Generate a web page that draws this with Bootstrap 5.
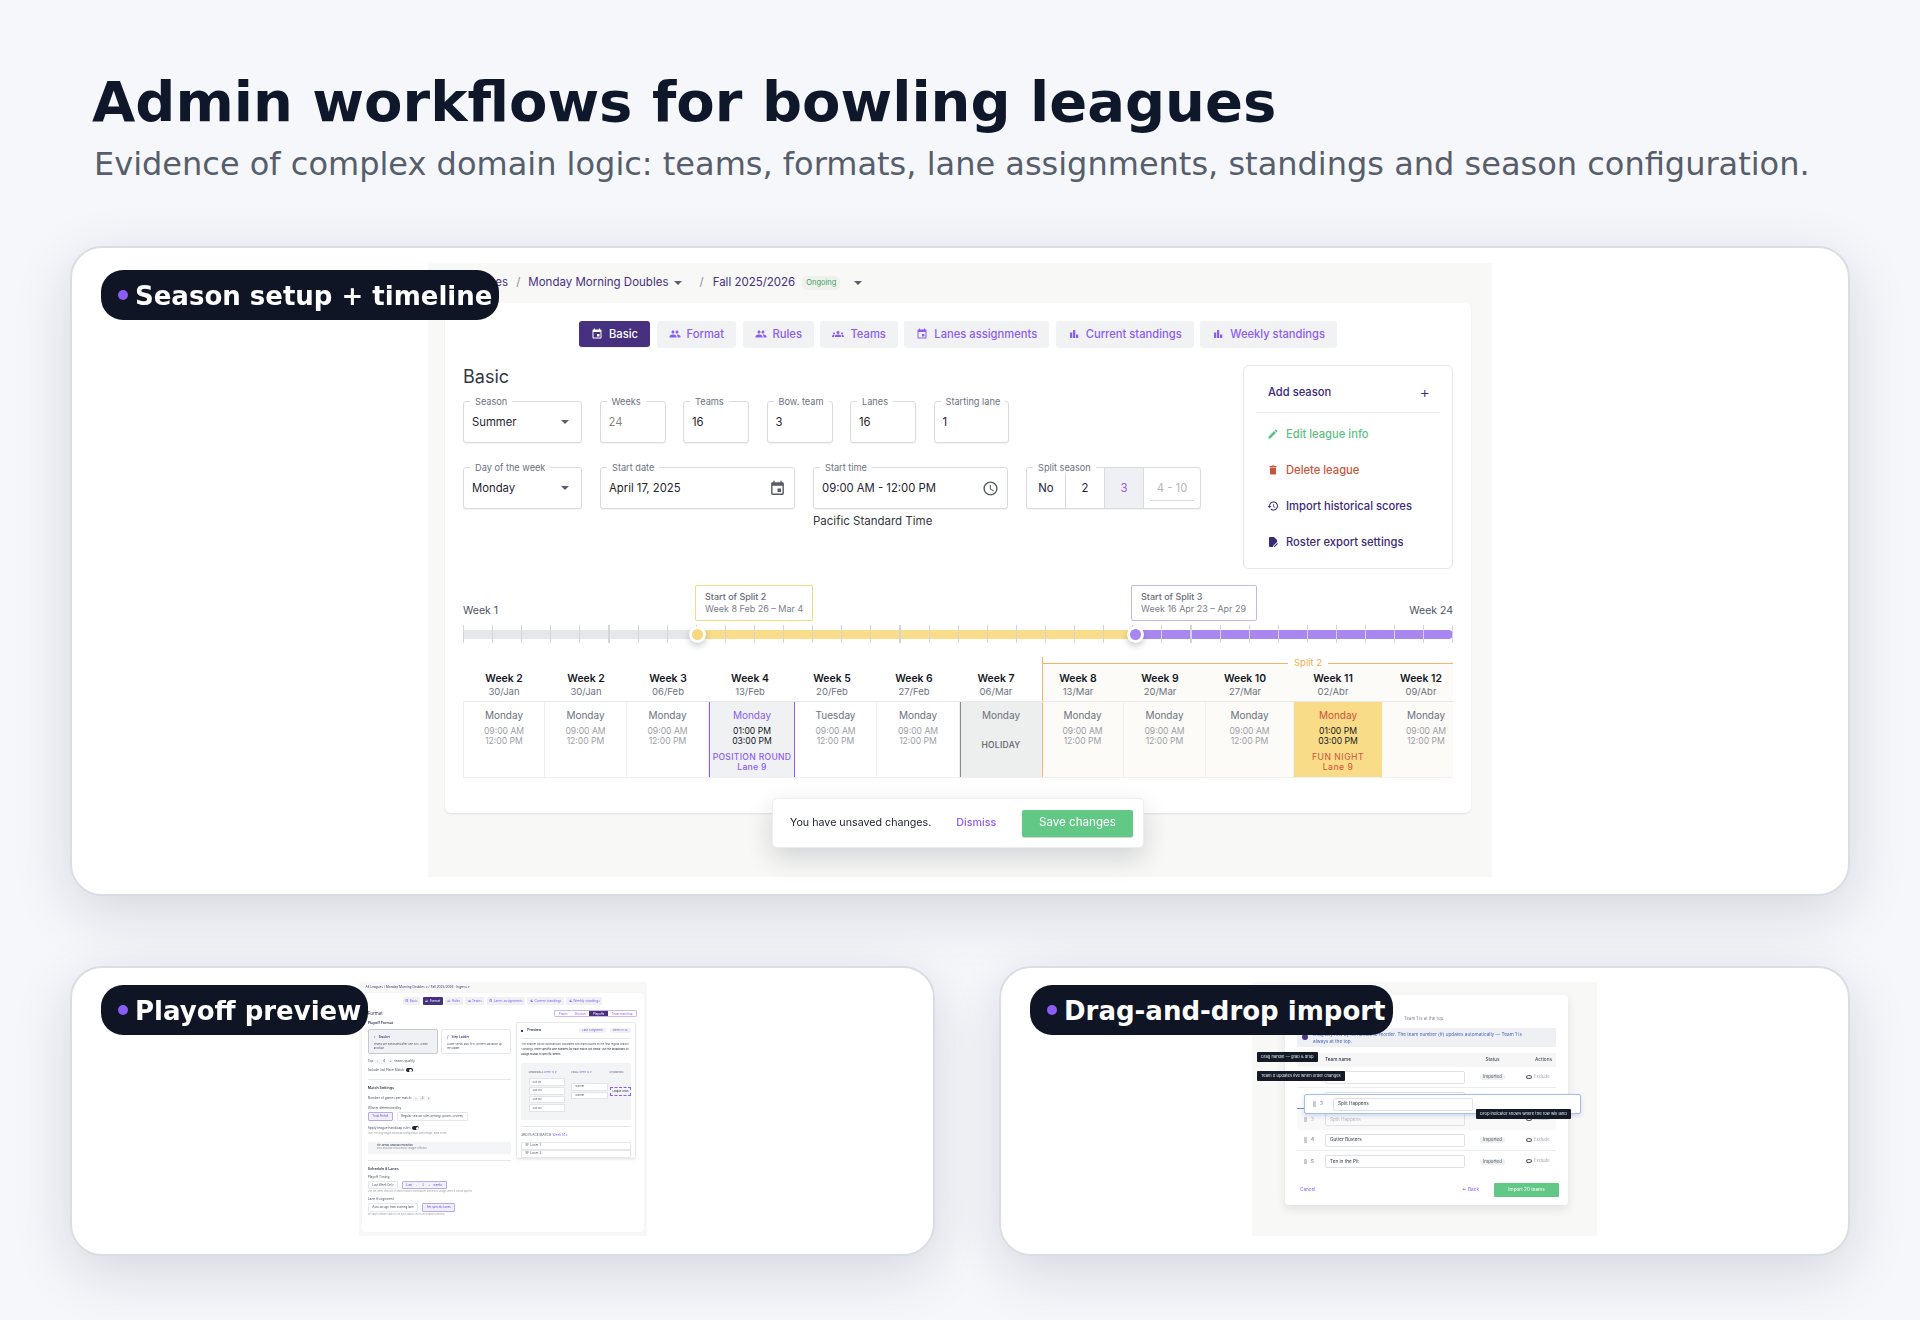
<!DOCTYPE html>
<html lang="en">
<head>
  <meta charset="UTF-8">
  <title>Admin workflows for bowling leagues</title>
  <link href="https://cdn.jsdelivr.net/npm/bootstrap@5.3.2/dist/css/bootstrap.min.css" rel="stylesheet">
  <style>
    body { background: #f6f7fb; font-family: Inter, "Liberation Sans", sans-serif; color: #1f2430; }
    .page-wrap { width: 1920px; height: 1320px; padding: 70px 70px 0; overflow: hidden; }
    .hero-title { font: 700 56px/64px "DejaVu Sans", sans-serif; color: #0f172a; margin: 0 0 0 22px; }
    .hero-sub { font: 400 32px/40px "DejaVu Sans", sans-serif; color: #565e6c; margin: 10px 0 0 24px; }
    .show-card { position: relative; background: #fff; border: 2px solid #d9dde5; border-radius: 32px; box-shadow: 0 16px 60px rgba(15, 23, 42, .14); display: flex; justify-content: center; }
    .show-main { height: 650px; margin-top: 62px; padding-top: 15px; }
    .show-row { display: grid; grid-template-columns: 865px 851px; gap: 64px; margin-top: 70px; }
    .show-small { height: 290px; padding-top: 14px; }
    .tag-pill { position: absolute; left: 29px; top: 22px; height: 50px; background: #0f1524; color: #fff; border-radius: 22px; font: 700 26px/52px "DejaVu Sans", sans-serif; padding: 0 7px 0 34px; white-space: nowrap; z-index: 5; }
    .show-small .tag-pill { top: 17px; }
    .tag-pill::before { content: ""; position: absolute; left: 17px; top: 20px; width: 10px; height: 10px; border-radius: 50%; background: #8b5cf6; }

    /* main screenshot */
    .shot { width: 1064px; height: 614px; background: #f8f8f6; padding: 0 21px 0 17px; font-size: 11.5px; filter: blur(.2px); }
    .crumbs { height: 40px; color: #46307f; font-size: 11.5px; gap: 6px; }
    .crumb-sep { color: #8a8f99; margin: 0 2px; }
    .crumb-sep-b { color: #8a8f99; margin: 0 3px 0 11px; }
    .tri { display: inline-block; width: 0; height: 0; border-left: 4px solid transparent; border-right: 4px solid transparent; border-top: 4.5px solid #5b6070; }
    .live-pill { background: #eff1ec; color: #3f9b64; font-size: 7.5px; border-radius: 5px; padding: 1px 4px; margin-left: 1px; }
    .panel { position: relative; height: 510px; background: #fff; border-radius: 6px; box-shadow: 0 1px 2px rgba(0, 0, 0, .1); padding: 18px 18px 0; }
    .tab-row { gap: 6.5px; }
    .tab-btn { height: 26px; padding: 0 12px; background: #f1f2f3; color: #8b5cf6; border-radius: 3px; font-size: 11.2px; font-weight: 500; gap: 6px; white-space: nowrap; box-shadow: 0 1px 1px rgba(0, 0, 0, .05); }
    .tab-btn svg { width: 12px; height: 12px; fill: currentColor; }
    .tab-on { background: #46307f; color: #fff; }
    .sect-title { font-size: 18px; line-height: 22px; font-weight: 400; margin: 19px 0 13px; color: #333842; }
    .fld { position: relative; height: 42px; border: 1px solid #d9dbde; border-radius: 3px; padding: 0 8px; background: #fff; font-size: 11.3px; box-shadow: 0 1px 1px rgba(0, 0, 0, .05); }
    .fld-cap { position: absolute; top: -6px; left: 6px; padding: 0 5px; background: #fff; font-size: 9.2px; line-height: 11px; color: #6b7280; white-space: nowrap; }
    .fld svg { width: 17px; height: 17px; fill: #565b66; }
    .w-119 { width: 119px; } .w-66 { width: 66px; } .w-73 { width: 75px; } .w-195 { width: 195px; }
    .field-gap { gap: 17.5px; }
    .field-gap-b { gap: 18px; }
    .seg-cell { width: 39px; height: 100%; border-right: 1px solid #d9dbde; }
    .seg-on { background: #eef0f3; color: #8b5cf6; }
    .seg-off { width: 56px; border-right: 0; color: #b4b7bd; position: relative; }
    .seg-off::after { content: ""; position: absolute; left: 6px; right: 6px; bottom: 7px; border-bottom: 1px solid #d9dbde; }
    .tz-note { margin: 5px 0 0 350px; font-size: 11.5px; line-height: 14px; color: #333842; }
    .side-box { width: 210px; height: 204px; border: 1px solid #e6e7ea; border-radius: 6px; margin-top: 18px; padding: 0 12px; font-weight: 500; color: #3b2a78; font-size: 11.2px; }
    .side-head { height: 47px; padding: 6px 10px 0 12px; border-bottom: 1px solid #e9eaec; margin-bottom: 3px; }
    .side-item { height: 36px; padding-left: 12px; gap: 7px; }
    .side-item svg { width: 12px; height: 12px; fill: currentColor; margin-left: -1px; }
    .tx-green { color: #5cbf85; } .tx-red { color: #c8553a; }

    /* timeline */
    .time-line { position: relative; height: 72px; margin-top: 16px; }
    .week-cap { position: absolute; top: 18px; font-size: 10.5px; color: #4b5563; }
    .track { position: absolute; left: 0; right: 0; top: 45px; height: 9px; border-radius: 0 5px 5px 0; background: linear-gradient(to right, #e6e7ea 0 234px, #f9dd8a 234px 672px, #a987f0 672px); }
    .ticks { position: absolute; left: 0; right: 0; top: 40px; height: 18px; background: repeating-linear-gradient(to right, #d3d5d9 0 1px, transparent 1px 29.1px); }
    .knob { position: absolute; top: 41px; width: 17px; height: 17px; border-radius: 50%; border: 3px solid #fff; box-shadow: 0 3px 6px rgba(15, 23, 42, .22); }
    .call-box { position: absolute; top: 0; height: 36px; padding: 5px 9px; background: #fff; border-radius: 2px; font-size: 9px; line-height: 12px; color: #7b808a; white-space: nowrap; }
    .call-box b { display: block; font-weight: 500; color: #666b75; }
    .week-wrap { position: relative; height: 121px; overflow: hidden; }
    .split-band { position: absolute; left: 579px; top: 0; right: 0; bottom: 0; border-left: 1px solid #f5b56a; }
    .split-fill { position: absolute; left: 0; right: 0; top: 6px; bottom: 0; background: #fcfbf7; border-top: 1px solid #f5b56a; }
    .split-cap { position: absolute; left: 245px; top: 0; padding: 0 6px; background: #fff; color: #f3a949; font-size: 9.5px; line-height: 12px; }
    .week-heads { position: relative; display: grid; grid-template-columns: repeat(9, 82px) repeat(3, 88px); height: 44px; padding-top: 15px; text-align: center; }
    .week-name { font-size: 10.4px; line-height: 14px; font-weight: 600; color: #14171f; }
    .week-date { font-size: 9.5px; line-height: 12px; color: #6b7280; }
    .week-cells { position: relative; display: grid; grid-template-columns: 82px 82px 82px 86px 82px 83px 82px 82px 82px 88px 88px 88px; height: 77px; border-top: 1px solid #e8e9eb; border-bottom: 1px solid #eeeff1; }
    .wk-cell { border-right: 1px solid #eff0f2; padding-top: 7px; text-align: center; font-size: 8.6px; line-height: 10px; color: #9b9fa7; white-space: nowrap; }
    .wk-cell:first-child { border-left: 1px solid #eff0f2; }
    .wk-day { display: block; font-size: 10px; line-height: 12px; color: #6b7280; margin-bottom: 5px; }
    .wk-note { display: block; margin-top: 6px; letter-spacing: .3px; font-weight: 500; }
    .wk-pos { background: #f0f1f3; border-left: 1px solid #8b5cf6; border-right: 1px solid #8b5cf6; color: #14171f; }
    .wk-pos .wk-day, .wk-pos .wk-note { color: #8b5cf6; }
    .wk-off { background: #edeeee; border-left: 1px solid #85888e; }
    .wk-off b { display: block; margin-top: 19px; font-size: 8.5px; letter-spacing: .3px; font-weight: 500; color: #5f636c; }
    .wk-fun { background: #f9dc87; color: #14171f; border-right: 0; }
    .wk-fun .wk-day, .wk-fun .wk-note { color: #d0523c; }
    .wk-fun .wk-note { font-weight: 400; letter-spacing: .5px; }
    .save-toast { position: absolute; left: 327px; top: 495px; width: 372px; height: 50px; background: #fff; border: 1px solid #eceef1; border-radius: 5px; box-shadow: 0 10px 26px rgba(15, 23, 42, .16); padding: 0 10px 0 17px; font-size: 10.7px; color: #20242c; white-space: nowrap; }
    .toast-link { color: #8b5cf6; font-weight: 500; margin-left: 25px; }
    .toast-save { flex: 0 0 111px; height: 27px; margin-left: auto; background: #62c885; color: #fff; border-radius: 2px; font-size: 11.6px; box-shadow: 0 1px 1px rgba(0, 0, 0, .18); }

    /* playoff thumbnail */
    .mini-a { width: 288px; height: 254px; background: #f8f8f6; padding: 0 3px; font-size: 3.2px; line-height: 5px; color: #4b5563; filter: blur(.3px); white-space: nowrap; }
    .mini-crumbs { height: 11px; color: #46307f; }
    .mini-panel { position: relative; height: 239px; background: #fff; border-radius: 2px; padding: 4px 6.3px 0; box-shadow: 0 0 1px rgba(0, 0, 0, .1); }
    .mini-tab { height: 8px; padding: 0 2.5px; gap: 1px; background: #f0f1f4; color: #8b5cf6; border-radius: 1px; }
    .mini-tab svg { width: 3.5px; height: 3.5px; fill: currentColor; }
    .mini-on { background: #46307f; color: #fff; }
    .mini-tabs { gap: 2.3px; }
    .mini-bar { height: 7px; margin: 5px 0 4px; }
    .mini-h { font-size: 4.5px; color: #333842; }
    .mini-seg { height: 7px; border: .4px solid #c9b8f0; border-radius: 1px; }
    .mini-seg span { padding: 0 3.6px; color: #8b5cf6; line-height: 6px; font-size: 3px; }
    .mini-seg .mini-on { color: #fff; }
    .mini-left { width: 143px; }
    .mini-right { width: 120.3px; height: 137px; margin-left: 5px; margin-top: 1px; border: .4px solid #e8e9eb; border-radius: 2px; padding: 5px 4.5px 0; box-shadow: 0 1px 2px rgba(0, 0, 0, .08); }
    .mini-b { font-size: 3.6px; font-weight: 600; color: #374151; }
    .ln { height: 5px; display: flex; align-items: center; gap: 1.5px; }
    .mt-1h { margin-top: 1px; } .mt-2h { margin-top: 1.5px; } .mt-3h { margin-top: 3px; } .mt-4h { margin-top: 4px; } .mt-5h { margin-top: 5px; } .mt-6h { margin-top: 6px; }
    .mini-opts { gap: 3px; margin-top: 3px; }
    .mini-opt { width: 70px; height: 24.5px; border: .4px solid #e6e7ea; border-radius: 2px; padding: 3.5px 5px; font-size: 2.7px; line-height: 4px; white-space: normal; }
    .mini-sel { background: #f0f1f4; border-color: #c6c8cf; }
    .mini-opt-head { display: flex; align-items: center; gap: 3px; height: 6px; margin-bottom: 2.5px; font-size: 3px; font-weight: 600; color: #46307f; }
    .mini-ico { font-size: 5px; color: #8b5cf6; font-weight: 400; }
    .mini-hr { border-top: .4px solid #e6e7ea; margin: 6.5px 0 5.5px; }
    .mini-btn { height: 8.7px; padding: 0 3.5px; border: .4px solid #e6e7ea; border-radius: 1px; font-size: 2.9px; gap: 1.5px; }
    .mini-act { background: #f1f0fa; border-color: #bba8ee; color: #6d4fd0; }
    .mini-note { height: 4px; line-height: 4px; font-size: 2.4px; color: #9b9fa7; }
    .mini-step { display: inline-block; min-width: 5px; padding: 0 1px; text-align: center; background: #f4f5f6; border-radius: .5px; line-height: 5px; }
    .mini-sw { position: relative; display: inline-block; width: 7px; height: 4px; border-radius: 2px; background: #1f2430; }
    .mini-sw::after { content: ""; position: absolute; right: .5px; top: .5px; width: 3px; height: 3px; border-radius: 50%; background: #fff; }
    .mini-alert { height: 12px; background: #f4f5f6; border-radius: 1px; padding: 2px 3px 0 9px; font-size: 2.6px; line-height: 3.8px; color: #8a8f99; }
    .mini-alert b { color: #4b5563; font-weight: 600; }
    .mini-pill { padding: 0 3px; background: #f0effa; color: #7b61d6; border-radius: 2px; font-size: 2.5px; line-height: 5px; }
    .mini-sq { width: 2px; height: 2px; background: #46307f; }
    .mini-copy { font-size: 2.55px; line-height: 5px; white-space: normal; margin-top: -1.5px; }
    .mini-copy b { font-weight: 500; color: #333842; }
    .mini-hr-b { border-top: .4px solid #e6e7ea; margin: 5px 0 4px; }
    .mini-bracket { height: 57px; margin-top: 6px; background: #f3f4f5; border-radius: 2px; padding: 7.5px 0 0 7.3px; font-size: 2.5px; overflow: hidden; }
    .mini-col-a { flex: 0 0 42.7px; }
    .mini-col-b { flex: 0 0 38.3px; }
    .mini-slot { height: 7.7px; width: 36px; background: #fff; border: .3px solid #e3e4e7; margin-bottom: 1px; padding: 0 3px; font-size: 2.7px; }
    .mini-col-b .mini-slot { width: 36.7px; }
    .mini-cap { height: 5px; line-height: 5px; margin-bottom: 3.2px; }
    .mini-champ { width: 21px; height: 8.7px; margin-top: 12.3px; border: .4px dashed #8b5cf6; background: #f4f2fb; font-weight: 600; padding-left: 2px; font-size: 2.4px; }
    .mini-row { height: 8.3px; border: .4px solid #e6e7ea; padding: 0 3px; }

    /* import thumbnail */
    .mini-c { position: relative; width: 345px; height: 254px; background: #f8f8f6; padding: 13px 29px 0 33px; font-size: 4.7px; color: #4b5563; filter: blur(.25px); white-space: nowrap; }
    .imp-card { height: 210px; background: #fff; border-radius: 4px; padding: 18px 12px 0; box-shadow: 0 4px 10px rgba(15, 23, 42, .1); }
    .imp-top { padding-left: 107px; height: 15px; line-height: 12px; color: #7b808a; font-size: 4.3px; }
    .imp-alert { height: 19px; background: #eef0f4; color: #4a66b8; padding: 0 6px 0 16px; position: relative; line-height: 6.3px; display: flex; align-items: center; }
    .imp-alert::before { content: ""; position: absolute; left: 5px; top: 6px; width: 6px; height: 6px; border-radius: 50%; background: #46307f; }
    .imp-head { height: 14px; margin-top: 6px; background: #f6f6f7; font-weight: 500; }
    .imp-row { height: 21px; border-bottom: .4px solid #eceef0; }
    .imp-num { display: flex; align-items: center; gap: 4px; width: 28px; padding-left: 7px; color: #4b5563; }
    .imp-grip { display: inline-block; width: 3px; height: 5.5px; background: #c9ccd2; border-radius: .5px; }
    .imp-input { width: 140px; height: 13px; border: .5px solid #dfe1e5; border-radius: 2px; padding: 0 4px; color: #333842; display: flex; align-items: center; }
    .imp-stat { width: 55px; text-align: center; }
    .imp-stat span { padding: 0 3px; background: #eeeff1; border-radius: 3px; line-height: 6px; display: inline-block; font-size: 4.4px; }
    .imp-act { margin-left: 6px; color: #a0a4ab; gap: 2px; font-size: 4.2px; }
    .imp-acth { width: 26px; margin-left: 6px; text-align: right; }
    .imp-eye { width: 6px; height: 4px; border: .7px solid #5a5f6a; border-radius: 50%; }
    .imp-ghost { background: #f9f9fa; color: #b4b7bd; border-bottom: 0; }
    .imp-ghost .imp-input, .imp-ghost .imp-num { color: #b4b7bd; }
    .imp-drag { position: absolute; left: 52px; top: 112px; width: 277px; height: 20px; background: #fff; border: .8px solid #a3bdf0; border-radius: 2px; box-shadow: 0 2px 4px rgba(60, 90, 170, .2); padding-left: 8px; z-index: 2; color: #333842; }
    .imp-dragnum { display: flex; align-items: center; gap: 4px; width: 20px; }
    .imp-line { position: absolute; left: 45px; top: 126px; width: 7px; border-top: .7px solid #6d8fdc; }
    .imp-tip { position: absolute; height: 10px; line-height: 10px; padding: 0 4px; background: #151a28; color: #e5e7eb; border-radius: 1px; font-size: 4.1px; z-index: 3; }
    .imp-foot { height: 36px; margin: 0 -3px 0 3px; }
    .imp-go { width: 65px; height: 14px; gap: 3px; background: #62c885; color: #fff; border-radius: 1px; margin-left: 15px; }
    .imp-link { color: #8b5cf6; }
  </style>
</head>
<body>
  <svg width="0" height="0" class="d-block position-absolute">
    <symbol id="i-event" viewBox="0 0 24 24"><path d="M17 12h-5v5h5v-5zM16 1v2H8V1H6v2H5c-1.11 0-1.99.9-1.99 2L3 19c0 1.1.89 2 2 2h14c1.1 0 2-.9 2-2V5c0-1.1-.9-2-2-2h-1V1h-2zm3 18H5V8h14v11z"/></symbol>
    <symbol id="i-people" viewBox="0 0 24 24"><path d="M16 11c1.66 0 2.99-1.34 2.99-3S17.66 5 16 5c-1.66 0-3 1.34-3 3s1.34 3 3 3zm-8 0c1.66 0 2.99-1.34 2.99-3S9.66 5 8 5C6.34 5 5 6.34 5 8s1.34 3 3 3zm0 2c-2.33 0-7 1.17-7 3.5V19h14v-2.5c0-2.33-4.67-3.5-7-3.5zm8 0c-.29 0-.62.02-.97.05 1.16.84 1.97 1.97 1.97 3.45V19h6v-2.5c0-2.33-4.67-3.5-7-3.5z"/></symbol>
    <symbol id="i-groups" viewBox="0 0 24 24"><path d="M12 12.75c1.63 0 3.07.39 4.24.9 1.08.48 1.76 1.56 1.76 2.73V18H6v-1.61c0-1.18.68-2.26 1.76-2.73 1.17-.52 2.61-.91 4.24-.91zM4 13c1.1 0 2-.9 2-2s-.9-2-2-2-2 .9-2 2 .9 2 2 2zm1.13 1.1C4.76 14.04 4.39 14 4 14c-.99 0-1.93.21-2.78.58C.48 14.9 0 15.62 0 16.43V18h4.5v-1.61c0-.83.23-1.61.63-2.29zM20 13c1.1 0 2-.9 2-2s-.9-2-2-2-2 .9-2 2 .9 2 2 2zm4 3.43c0-.81-.48-1.53-1.22-1.85-.85-.37-1.79-.58-2.78-.58-.39 0-.76.04-1.13.1.4.68.63 1.46.63 2.29V18H24v-1.57zM12 6c1.66 0 3 1.34 3 3s-1.34 3-3 3-3-1.34-3-3 1.34-3 3-3z"/></symbol>
    <symbol id="i-bars" viewBox="0 0 24 24"><path d="M4 9h4.5v11H4zM10 4h4.5v16H10zM16 13h4.5v7H16z"/></symbol>
    <symbol id="i-edit" viewBox="0 0 24 24"><path d="M3 17.25V21h3.75L17.81 9.94l-3.75-3.75L3 17.25zM20.71 7.04c.39-.39.39-1.02 0-1.41l-2.34-2.34c-.39-.39-1.02-.39-1.41 0l-1.83 1.83 3.75 3.75 1.83-1.83z"/></symbol>
    <symbol id="i-trash" viewBox="0 0 24 24"><path d="M6 19c0 1.1.9 2 2 2h8c1.1 0 2-.9 2-2V7H6v12zM19 4h-3.5l-1-1h-5l-1 1H5v2h14V4z"/></symbol>
    <symbol id="i-history" viewBox="0 0 24 24"><path d="M13 3c-4.97 0-9 4.03-9 9H1l3.89 3.89.07.14L9 12H6c0-3.87 3.13-7 7-7s7 3.13 7 7-3.13 7-7 7c-1.93 0-3.68-.79-4.94-2.06l-1.42 1.42C8.27 19.99 10.51 21 13 21c4.97 0 9-4.03 9-9s-4.03-9-9-9zm-1 5v5l4.28 2.54.72-1.21-3.5-2.08V8H12z"/></symbol>
    <symbol id="i-file" viewBox="0 0 24 24"><path d="M6 2h8l6 6v4l-8 8v2H6c-1.1 0-2-.9-2-2V4c0-1.1.9-2 2-2zM14 22v-1.5l6.5-6.5 1.5 1.5-6.5 6.5H14z"/></symbol>
    <symbol id="i-clock" viewBox="0 0 24 24"><path d="M12 2a10 10 0 1 0 0 20 10 10 0 0 0 0-20zm0 18a8 8 0 1 1 0-16 8 8 0 0 1 0 16zm.5-13H11v6l5 3 .8-1.2-4.3-2.6V7z"/></symbol>
  </svg>

  <div class="page-wrap">
    <h1 class="hero-title">Admin workflows for bowling leagues</h1>
    <p class="hero-sub">Evidence of complex domain logic: teams, formats, lane assignments, standings and season configuration.</p>

    <!-- season setup -->
    <div class="show-card show-main">
      <div class="tag-pill">Season setup + timeline</div>
      <div class="shot">
        <div class="crumbs d-flex align-items-center">
          <span>All Leagues</span><span class="crumb-sep">/</span>
          <span>Monday Morning Doubles</span><span class="tri"></span>
          <span class="crumb-sep-b">/</span>
          <span>Fall 2025/2026</span><span class="live-pill">Ongoing</span><span class="tri ms-2"></span>
        </div>
        <div class="panel">
          <div class="tab-row d-flex justify-content-center">
            <div class="tab-btn tab-on d-flex align-items-center"><svg><use href="#i-event"/></svg>Basic</div>
            <div class="tab-btn d-flex align-items-center"><svg><use href="#i-people"/></svg>Format</div>
            <div class="tab-btn d-flex align-items-center"><svg><use href="#i-people"/></svg>Rules</div>
            <div class="tab-btn d-flex align-items-center"><svg><use href="#i-groups"/></svg>Teams</div>
            <div class="tab-btn d-flex align-items-center"><svg><use href="#i-event"/></svg>Lanes assignments</div>
            <div class="tab-btn d-flex align-items-center"><svg><use href="#i-bars"/></svg>Current standings</div>
            <div class="tab-btn d-flex align-items-center"><svg><use href="#i-bars"/></svg>Weekly standings</div>
          </div>

          <div class="d-flex justify-content-between">
            <div>
              <h2 class="sect-title">Basic</h2>
              <div class="d-flex field-gap">
                <div class="fld w-119 d-flex align-items-center justify-content-between"><span class="fld-cap">Season</span>Summer<span class="tri me-1"></span></div>
                <div class="fld w-66 d-flex align-items-center text-black-50"><span class="fld-cap">Weeks</span>24</div>
                <div class="fld w-66 d-flex align-items-center"><span class="fld-cap">Teams</span>16</div>
                <div class="fld w-66 d-flex align-items-center"><span class="fld-cap">Bow. team</span>3</div>
                <div class="fld w-66 d-flex align-items-center"><span class="fld-cap">Lanes</span>16</div>
                <div class="fld w-73 d-flex align-items-center"><span class="fld-cap">Starting lane</span>1</div>
              </div>
              <div class="d-flex field-gap-b mt-4">
                <div class="fld w-119 d-flex align-items-center justify-content-between"><span class="fld-cap">Day of the week</span>Monday<span class="tri me-1"></span></div>
                <div class="fld w-195 d-flex align-items-center justify-content-between"><span class="fld-cap">Start date</span>April 17, 2025<svg><use href="#i-event"/></svg></div>
                <div class="fld w-195 d-flex align-items-center justify-content-between"><span class="fld-cap">Start time</span>09:00 AM - 12:00 PM<svg><use href="#i-clock"/></svg></div>
                <div class="fld d-flex align-items-center p-0"><span class="fld-cap">Split season</span>
                  <div class="seg-cell d-flex align-items-center justify-content-center">No</div>
                  <div class="seg-cell d-flex align-items-center justify-content-center">2</div>
                  <div class="seg-cell seg-on d-flex align-items-center justify-content-center">3</div>
                  <div class="seg-cell seg-off d-flex align-items-center justify-content-center">4 - 10</div>
                </div>
              </div>
              <div class="tz-note">Pacific Standard Time</div>
            </div>
            <div class="side-box">
              <div class="side-head d-flex align-items-center justify-content-between"><span>Add season</span><span class="fs-6 fw-light">+</span></div>
              <div class="side-item tx-green d-flex align-items-center"><svg><use href="#i-edit"/></svg>Edit league info</div>
              <div class="side-item tx-red d-flex align-items-center"><svg><use href="#i-trash"/></svg>Delete league</div>
              <div class="side-item d-flex align-items-center"><svg><use href="#i-history"/></svg>Import historical scores</div>
              <div class="side-item d-flex align-items-center"><svg><use href="#i-file"/></svg>Roster export settings</div>
            </div>
          </div>

          <div class="time-line">
            <span class="week-cap start-0">Week 1</span>
            <span class="week-cap end-0">Week 24</span>
            <div class="track"></div>
            <div class="ticks"></div>
            <div class="knob" style="left:226px;background:#f9d77e"></div>
            <div class="knob" style="left:664px;background:#a987f0"></div>
            <div class="call-box" style="left:232px;width:118px;border:1px solid #f9d77e"><b>Start of Split 2</b>Week 8 Feb 26 – Mar 4</div>
            <div class="call-box" style="left:668px;width:126px;border:1px solid #c8b5f3"><b>Start of Split 3</b>Week 16 Apr 23 – Apr 29</div>
          </div>

          <div class="week-wrap">
            <div class="split-band"><div class="split-fill"></div><span class="split-cap">Split 2</span></div>
            <div class="week-heads">
              <div><div class="week-name">Week 2</div><div class="week-date">30/Jan</div></div>
              <div><div class="week-name">Week 2</div><div class="week-date">30/Jan</div></div>
              <div><div class="week-name">Week 3</div><div class="week-date">06/Feb</div></div>
              <div><div class="week-name">Week 4</div><div class="week-date">13/Feb</div></div>
              <div><div class="week-name">Week 5</div><div class="week-date">20/Feb</div></div>
              <div><div class="week-name">Week 6</div><div class="week-date">27/Feb</div></div>
              <div><div class="week-name">Week 7</div><div class="week-date">06/Mar</div></div>
              <div><div class="week-name">Week 8</div><div class="week-date">13/Mar</div></div>
              <div><div class="week-name">Week 9</div><div class="week-date">20/Mar</div></div>
              <div><div class="week-name">Week 10</div><div class="week-date">27/Mar</div></div>
              <div><div class="week-name">Week 11</div><div class="week-date">02/Abr</div></div>
              <div><div class="week-name">Week 12</div><div class="week-date">09/Abr</div></div>
            </div>
            <div class="week-cells">
              <div class="wk-cell"><span class="wk-day">Monday</span>09:00 AM<br>12:00 PM</div>
              <div class="wk-cell"><span class="wk-day">Monday</span>09:00 AM<br>12:00 PM</div>
              <div class="wk-cell"><span class="wk-day">Monday</span>09:00 AM<br>12:00 PM</div>
              <div class="wk-cell wk-pos"><span class="wk-day">Monday</span>01:00 PM<br>03:00 PM<span class="wk-note">POSITION ROUND<br>Lane 9</span></div>
              <div class="wk-cell"><span class="wk-day">Tuesday</span>09:00 AM<br>12:00 PM</div>
              <div class="wk-cell"><span class="wk-day">Monday</span>09:00 AM<br>12:00 PM</div>
              <div class="wk-cell wk-off"><span class="wk-day">Monday</span><b>HOLIDAY</b></div>
              <div class="wk-cell"><span class="wk-day">Monday</span>09:00 AM<br>12:00 PM</div>
              <div class="wk-cell"><span class="wk-day">Monday</span>09:00 AM<br>12:00 PM</div>
              <div class="wk-cell"><span class="wk-day">Monday</span>09:00 AM<br>12:00 PM</div>
              <div class="wk-cell wk-fun"><span class="wk-day">Monday</span>01:00 PM<br>03:00 PM<span class="wk-note">FUN NIGHT<br>Lane 9</span></div>
              <div class="wk-cell border-0"><span class="wk-day">Monday</span>09:00 AM<br>12:00 PM</div>
            </div>
          </div>

          <div class="save-toast d-flex align-items-center">
            <span>You have unsaved changes.</span>
            <span class="toast-link">Dismiss</span>
            <div class="toast-save d-flex align-items-center justify-content-center">Save changes</div>
          </div>
        </div>
      </div>
    </div>

    <div class="show-row">
      <!-- playoff preview -->
      <div class="show-card show-small">
        <div class="tag-pill">Playoff preview</div>
        <div class="mini-a">
          <div class="mini-crumbs d-flex align-items-center ps-1"><span>All Leagues / Monday Morning Doubles ▾ / Fall 2025/2026 · Ingress ▾</span></div>
          <div class="mini-panel">
            <div class="mini-tabs d-flex justify-content-center">
              <div class="mini-tab d-flex align-items-center"><svg><use href="#i-event"/></svg>Basic</div>
              <div class="mini-tab mini-on d-flex align-items-center"><svg><use href="#i-people"/></svg>Format</div>
              <div class="mini-tab d-flex align-items-center"><svg><use href="#i-people"/></svg>Rules</div>
              <div class="mini-tab d-flex align-items-center"><svg><use href="#i-groups"/></svg>Teams</div>
              <div class="mini-tab d-flex align-items-center"><svg><use href="#i-event"/></svg>Lanes assignments</div>
              <div class="mini-tab d-flex align-items-center"><svg><use href="#i-bars"/></svg>Current standings</div>
              <div class="mini-tab d-flex align-items-center"><svg><use href="#i-bars"/></svg>Weekly standings</div>
            </div>
            <div class="mini-bar d-flex justify-content-between align-items-center">
              <span class="mini-h">Format</span>
              <div class="mini-seg d-flex">
                <span>Points</span><span>Division</span><span class="mini-on">Playoffs</span><span>Team matchup</span>
              </div>
            </div>
            <div class="d-flex">
              <div class="mini-left">
                <div class="ln mini-b">Playoff Format</div>
                <div class="mini-opts d-flex">
                  <div class="mini-opt mini-sel"><div class="mini-opt-head"><span class="mini-ico">›</span>Bracket</div>Teams are eliminated after one loss. Clean and fast.</div>
                  <div class="mini-opt"><div class="mini-opt-head"><span class="mini-ico">/</span>Step Ladder</div>Lower seeds play first; winners advance up the ladder.</div>
                </div>
                <div class="ln mt-5h">Top <span class="mini-step">-</span><span class="mini-step">4</span><span class="mini-step">+</span> teams qualify</div>
                <div class="ln mt-4h">Include 3rd Place Match <span class="mini-sw"></span></div>
                <div class="mini-hr"></div>
                <div class="ln mini-b">Match Settings</div>
                <div class="ln mt-5h">Number of games per match: <span class="mini-step">-</span><span class="mini-step">3</span><span class="mini-step">+</span></div>
                <div class="ln mt-5h">Winner determined by</div>
                <div class="d-flex gap-1 mt-2h">
                  <div class="mini-btn mini-act d-flex align-items-center">Total Pinfall</div>
                  <div class="mini-btn d-flex align-items-center">Regular season rules/settings (points system)</div>
                </div>
                <div class="ln mt-5h">Apply league handicap rules <span class="mini-sw"></span></div>
                <div class="mini-note mt-1h">Uses existing league handicap configuration (percentage, base score).</div>
                <div class="mini-alert mt-6h"><b>Tie-break: Manual resolution</b><br>Ties must be resolved by league officials</div>
                <div class="mini-hr"></div>
                <div class="ln mini-b">Schedule &amp; Lanes</div>
                <div class="ln mt-3h">Playoff Timing</div>
                <div class="d-flex gap-1 mt-1h">
                  <div class="mini-btn d-flex align-items-center">Last Week Only</div>
                  <div class="mini-btn mini-act d-flex align-items-center">Last <span class="mini-step">-</span><span class="mini-step">3</span><span class="mini-step">+</span> weeks</div>
                </div>
                <div class="mini-note mt-1h">Use the week selector on each round in the bracket preview to assign when it will be played.</div>
                <div class="ln mt-3h">Lane Assignment</div>
                <div class="d-flex gap-1 mt-1h">
                  <div class="mini-btn d-flex align-items-center">Auto-assign from starting lane</div>
                  <div class="mini-btn mini-act d-flex align-items-center">Set specific lanes</div>
                </div>
                <div class="mini-note mt-1h">Set lane numbers directly on each match slot in the bracket preview.</div>
              </div>
              <div class="mini-right">
                <div class="ln justify-content-between">
                  <div class="d-flex align-items-center gap-1"><span class="mini-sq"></span><span class="mini-b">Preview</span></div>
                  <div class="d-flex gap-1"><span class="mini-pill">Lane Assignment</span><span class="mini-pill">Weeks 15-16</span></div>
                </div>
                <div class="mini-hr-b"></div>
                <div class="mini-copy">This bracket will be automatically populated with teams based on the final regular season standings. <b>Enter specific lane numbers for each match slot below. Use the dropdowns to assign rounds to specific weeks.</b></div>
                <div class="mini-bracket">
                  <div class="d-flex">
                    <div class="mini-col-a">
                      <div class="mini-cap">SEMIFINALS <span class="imp-link">Week 15 ▾</span></div>
                      <div class="mini-slot d-flex align-items-center">Slot #1</div>
                      <div class="mini-slot d-flex align-items-center">Slot #4</div>
                      <div class="mini-slot d-flex align-items-center">Slot #2</div>
                      <div class="mini-slot d-flex align-items-center">Slot #3</div>
                    </div>
                    <div class="mini-col-b">
                      <div class="mini-cap">FINAL <span class="imp-link">Week 14 ▾</span></div>
                      <div class="mini-slot d-flex align-items-center mt-2">Winner</div>
                      <div class="mini-slot d-flex align-items-center">Winner</div>
                    </div>
                    <div>
                      <div class="mini-cap">CHAMPION</div>
                      <div class="mini-champ d-flex align-items-center">League Cham</div>
                    </div>
                  </div>
                </div>
                <div class="mini-hr"></div>
                <div class="ln mb-1">3RD PLACE MATCH <span class="imp-link">Week 14 ▾</span></div>
                <div class="mini-row d-flex align-items-center">SF Loser 1</div>
                <div class="mini-row d-flex align-items-center">SF Loser 2</div>
              </div>
            </div>
          </div>
        </div>
      </div>

      <!-- drag and drop import -->
      <div class="show-card show-small">
        <div class="tag-pill">Drag-and-drop import</div>
        <div class="mini-c">
          <div class="imp-card">
            <div class="imp-top">Team 1 is at the top.</div>
            <div class="imp-alert"><span>Drag any row by its handle to reorder. The team number (#) updates automatically — Team 1 is<br>always at the top.</span></div>
            <div class="imp-head d-flex align-items-center">
              <span class="imp-num"></span><span class="imp-input border-0 bg-transparent p-0">Team name</span><span class="imp-stat">Status</span><span class="imp-acth">Actions</span>
            </div>
            <div class="imp-row d-flex align-items-center"><span class="imp-num"></span><span class="imp-input"></span><span class="imp-stat"><span>Imported</span></span><span class="imp-act d-flex align-items-center"><i class="imp-eye"></i>Exclude</span></div>
            <div class="imp-row d-flex align-items-center"><span class="imp-num"></span><span class="imp-input"></span><span class="imp-stat"><span>Imported</span></span><span class="imp-act d-flex align-items-center"><i class="imp-eye"></i>Exclude</span></div>
            <div class="imp-row imp-ghost d-flex align-items-center"><span class="imp-num"><i class="imp-grip"></i>3</span><span class="imp-input">Split Happens</span><span class="imp-stat"></span><span class="imp-act d-flex align-items-center"><i class="imp-eye"></i>Exclude</span></div>
            <div class="imp-row d-flex align-items-center"><span class="imp-num"><i class="imp-grip"></i>4</span><span class="imp-input">Gutter Busters</span><span class="imp-stat"><span>Imported</span></span><span class="imp-act d-flex align-items-center"><i class="imp-eye"></i>Exclude</span></div>
            <div class="imp-row d-flex align-items-center border-0"><span class="imp-num"><i class="imp-grip"></i>5</span><span class="imp-input">Ten in the Pit</span><span class="imp-stat"><span>Imported</span></span><span class="imp-act d-flex align-items-center"><i class="imp-eye"></i>Exclude</span></div>
            <div class="imp-foot d-flex align-items-center justify-content-between">
              <span class="imp-link">Cancel</span>
              <div class="d-flex align-items-center"><span class="imp-link">← Back</span><div class="imp-go d-flex align-items-center justify-content-center">Import 20 teams</div></div>
            </div>
          </div>
          <div class="imp-line"></div>
          <div class="imp-drag d-flex align-items-center"><span class="imp-dragnum imp-link"><i class="imp-grip"></i>3</span><span class="imp-input">Split Happens</span></div>
          <div class="imp-tip" style="left:5px;top:70px">Drag handle — grab &amp; drop</div>
          <div class="imp-tip" style="left:5px;top:89px">Team # updates live when order changes</div>
          <div class="imp-tip" style="left:224px;top:127px">Drop indicator shows where the row will land</div>
        </div>
      </div>
    </div>
  </div>
  <script src="https://cdn.jsdelivr.net/npm/bootstrap@5.3.2/dist/js/bootstrap.bundle.min.js"></script>
</body>
</html>
